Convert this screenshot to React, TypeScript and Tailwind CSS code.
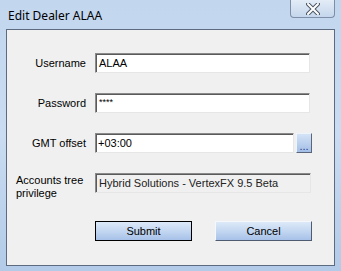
const sunken =
  'border border-t-[#8a8a8a] border-l-[#8a8a8a] border-b-[#e6e6e6] border-r-[#e6e6e6] shadow-[inset_1px_1px_0_#5a5a5a]';

function Field({ label, children }: { label: string; children: React.ReactNode }) {
  return (
    <div className="flex items-center h-[20px]">
      <div className="w-[80px] pr-[1px] text-right text-black">{label}</div>
      <div className="ml-[8px] flex">{children}</div>
    </div>
  );
}

function WinButton({ label, primary }: { label: string; primary?: boolean }) {
  return (
    <div
      className={
        'w-[97px] h-[20px] flex items-center justify-center text-black bg-gradient-to-b from-[#dde9f8] via-[#c3d7f1] to-[#a7c1e8] ' +
        (primary
          ? 'border border-black'
          : 'border border-t-[#f4f8fd] border-l-[#f4f8fd] border-b-[#4f5b6e] border-r-[#4f5b6e]')
      }
    >
      {label}
    </div>
  );
}

export default function App() {
  return (
    <div
      className="w-[341px] h-[271px] flex flex-col bg-gradient-to-b from-[#c2d6ee] via-[#c9dcf1] to-[#b3cbe8] overflow-hidden text-[11px]"
      style={{ fontFamily: '"Liberation Sans", Arial, sans-serif' }}
    >
      {/* Title bar */}
      <div className="h-[29px] flex items-start justify-between pl-[8px] pr-[6px]">
        <div className="mt-[7px] text-[12px] text-black" style={{ fontFamily: '"Noto Sans", "Liberation Sans", sans-serif' }}>
          Edit Dealer ALAA
        </div>
        <div className="w-[45px] h-[18px] rounded-b-[4px] border border-t-0 border-[#7d8ea6] bg-gradient-to-b from-[#e3ecf7] to-[#c5d6ec] flex items-center justify-center">
          <svg width="14" height="12" viewBox="0 0 14 12">
            <path d="M2 1 L12 11 M12 1 L2 11" stroke="#4b5563" strokeWidth="4" strokeLinecap="round" />
            <path d="M2 1 L12 11 M12 1 L2 11" stroke="#ffffff" strokeWidth="2" strokeLinecap="round" />
          </svg>
        </div>
      </div>

      {/* Client area */}
      <div className="mx-[6px] h-[237px] border border-[#5d6b80] bg-[#f0f0f0] flex flex-col pt-[23px] gap-[20px]">
        <Field label="Username">
          <div className={'w-[215px] h-[20px] bg-white px-[3px] flex items-center text-black ' + sunken}>ALAA</div>
        </Field>
        <Field label="Password">
          <div className={'w-[215px] h-[20px] bg-white px-[3px] flex items-center text-black text-[9px] ' + sunken}>****</div>
        </Field>
        <Field label="GMT offset">
          <div className={'w-[199px] h-[20px] bg-white px-[2px] flex items-center text-black ' + sunken}>+03:00</div>
          <div className="ml-[2px] w-[16px] h-[20px] bg-gradient-to-b from-[#d4e3f6] to-[#a3bfe6] border border-t-[#eef4fc] border-l-[#eef4fc] border-b-[#5b667a] border-r-[#5b667a] flex items-end justify-center text-[#1f3a8a] leading-[12px]">
            ...
          </div>
        </Field>
        <div className="flex items-start h-[20px]">
          <div className="w-[80px] pl-[9px] mt-[1px] leading-[13px] text-black">
            Accounts tree
            <br />
            privilege
          </div>
          <div className={'ml-[8px] w-[216px] h-[20px] bg-[#f0f0f0] px-[3px] flex items-center text-[#222] ' + sunken}>
            Hybrid Solutions - VertexFX 9.5 Beta
          </div>
        </div>
        <div className="flex mt-[8px] pl-[88px] gap-[23px]">
          <WinButton label="Submit" primary />
          <WinButton label="Cancel" />
        </div>
      </div>
    </div>
  );
}
